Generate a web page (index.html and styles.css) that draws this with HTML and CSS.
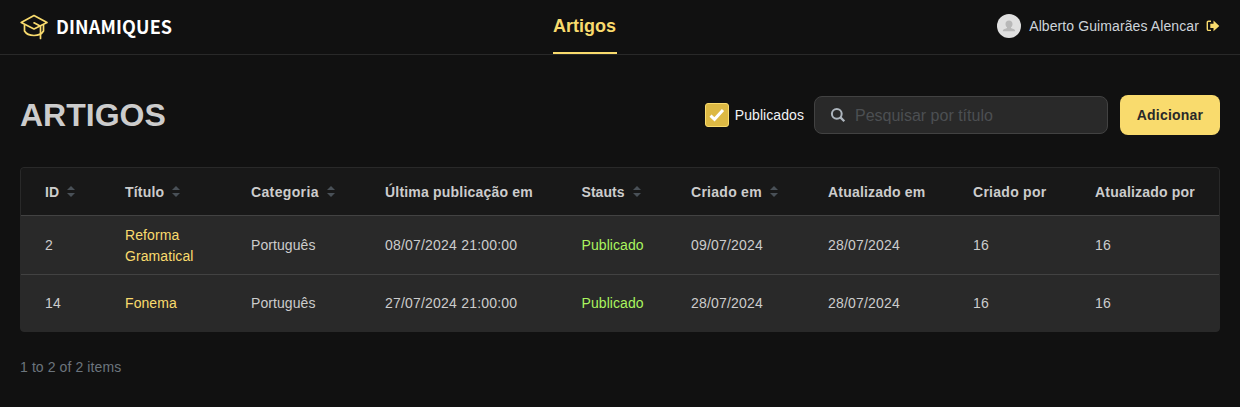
FILE: index.html
```html
<!DOCTYPE html>
<html lang="pt-BR">
<head>
<meta charset="utf-8">
<title>Dinamiques - Artigos</title>
<link rel="stylesheet" href="styles.css">
</head>
<body>
<header class="topbar">
  <a class="brand">
    <svg class="brand-icon" width="29" height="26" viewBox="0 0 29 26" fill="none" stroke="#f9db6d" stroke-width="1.700" stroke-linejoin="round" stroke-linecap="round"><path d="M1.200 8.500 14 1.500l13 7-13 6.500z"/><path d="M4.500 11v6c3.500 6 15.500 6 19 0v-6"/><path d="M14 8.800 20.500 12.300v12.200"/></svg>
    <span class="brand-name">DINAMIQUES</span>
  </a>
  <nav class="nav"><a class="nav-link">Artigos</a></nav>
  <div class="user">
    <svg width="24" height="24" viewBox="0 0 24 24"><circle cx="12" cy="12" r="12" fill="#e0e0e0"/><path d="M12 6.500c-2.200 0-3.500 1.400-3.500 3.500 0 1.500.6 2.600 1.500 3.200v.9c-.8.8-4.200.8-4.200 3.200h12.400c0-2.400-3.400-2.400-4.200-3.200v-.9c.9-.6 1.500-1.700 1.500-3.200 0-2.100-1.300-3.500-3.500-3.500z" fill="#b8b8b8"/></svg>
    <span class="user-name">Alberto Guimarães Alencar</span>
    <svg class="logout" width="14" height="12" viewBox="0 0 14 12"><path d="M5 1.200H2.500Q1.300 1.200 1.300 2.400v6.800q0 1.200 1.200 1.200H5" fill="none" stroke="#f9db6d" stroke-width="1.400"/><path d="M4.300 3.700h3.200V.5L13.300 5.900 7.500 11.300V8.100H4.300z" fill="#f9db6d"/></svg>
  </div>
</header>
<main class="page">
  <div class="toolbar">
    <h1 class="title">ARTIGOS</h1>
    <label class="check"><span class="check-box"><svg width="16" height="14" viewBox="0 0 16 14"><path d="M1.500 7.600 5.500 11.300 14 2" fill="none" stroke="#fff" stroke-width="3"/></svg></span><span class="check-label">Publicados</span></label>
    <div class="search">
      <svg width="16" height="16" viewBox="0 0 16 16" fill="none" stroke="#adb5bd"><circle cx="6.800" cy="6.800" r="4.900" stroke-width="2"/><path d="m10.400 10.400 3.900 3.900" stroke-width="2.300"/></svg>
      <span class="search-hint">Pesquisar por título</span>
    </div>
    <button class="add">Adicionar</button>
  </div>
  <div class="table">
    <div class="row head">
      <div class="cell"><span>ID</span><i class="sort"></i></div>
      <div class="cell"><span>Título</span><i class="sort"></i></div>
      <div class="cell wide"><span>Categoria</span><i class="sort"></i></div>
      <div class="cell"><span>Última publicação em</span></div>
      <div class="cell tight"><span>Stauts</span><i class="sort"></i></div>
      <div class="cell mid"><span>Criado em</span><i class="sort"></i></div>
      <div class="cell"><span>Atualizado em</span></div>
      <div class="cell mid"><span>Criado por</span></div>
      <div class="cell"><span>Atualizado por</span></div>
    </div>
    <div class="row first">
      <div class="cell">2</div>
      <div class="cell link">Reforma<br>Gramatical</div>
      <div class="cell word">Português</div>
      <div class="cell">08/07/2024 21:00:00</div>
      <div class="cell status">Publicado</div>
      <div class="cell">09/07/2024</div>
      <div class="cell">28/07/2024</div>
      <div class="cell">16</div>
      <div class="cell">16</div>
    </div>
    <div class="row">
      <div class="cell">14</div>
      <div class="cell link">Fonema</div>
      <div class="cell word">Português</div>
      <div class="cell">27/07/2024 21:00:00</div>
      <div class="cell status">Publicado</div>
      <div class="cell">28/07/2024</div>
      <div class="cell">28/07/2024</div>
      <div class="cell">16</div>
      <div class="cell">16</div>
    </div>
  </div>
  <div class="count">1 to 2 of 2 items</div>
</main>
</body>
</html>
```
FILE: styles.css
```css
* { box-sizing: border-box; }
body {
  margin: 0;
  background: #111;
  color: #ccc;
  font: 14px/21px "Liberation Sans", Arial, sans-serif;
}
.topbar {
  display: flex;
  justify-content: space-between;
  height: 55px;
  padding: 0 20px;
  border-bottom: 1px solid #292929;
}
.brand { display: flex; align-items: center; height: 53px; gap: 7px; }
.brand-name {
  width: 117px;
  padding-bottom: 1px;
  color: #fff;
  font: 700 18px/24px "Noto Sans CJK JP", sans-serif;
  letter-spacing: 0.15px;
}
.nav-link {
  display: block;
  width: 64px;
  height: 54px;
  padding-top: 15px;
  border-bottom: 2px solid #f9db6d;
  color: #f9db6d;
  font-size: 18px;
  font-weight: 700;
  line-height: 22px;
}
.user {
  display: flex;
  align-items: center;
  justify-content: flex-end;
  height: 52px;
}
.user-name { margin: 0 7px 0 8px; color: #ced4da; letter-spacing: 0.1px; }
.page { padding: 40px 20px 0; }
.toolbar { display: flex; align-items: center; height: 40px; }
.title {
  margin: 0 auto 0 0;
  color: #ccc;
  font-size: 32px;
  line-height: 40px;
}
.check { display: flex; align-items: center; gap: 6px; margin-right: 10px; }
.check-box {
  display: flex;
  align-items: center;
  justify-content: center;
  width: 24px;
  height: 24px;
  border: 1px solid #f9db6d;
  border-radius: 3px;
  background: #ddb944;
}
.check-label { color: #f1f3f5; letter-spacing: 0.07px; }
.search {
  display: flex;
  align-items: center;
  gap: 9px;
  width: 294px;
  height: 38px;
  margin-right: 12px;
  padding-left: 15px;
  border: 1px solid #424242;
  border-radius: 8px;
  background: #292929;
}
.search-hint { color: #4c4f52; font-size: 16px; }
.add {
  width: 100px;
  height: 40px;
  padding: 0;
  border: 0;
  border-radius: 8px;
  background: #f9db6d;
  color: #292929;
  font: 700 14px/20px "Liberation Sans", Arial, sans-serif;
  letter-spacing: 0.2px;
}
.table {
  margin-top: 32px;
  border: 1px solid #292929;
  border-radius: 4px;
  background: #292929;
  overflow: hidden;
}
.row {
  display: grid;
  grid-template-columns: 80px 126px 134px 196.5px 109.5px 137px 145px 122px 1fr;
  align-items: center;
  height: 56px;
}
.head {
  height: 48px;
  border-bottom: 1px solid #424242;
  background: #181818;
  color: #ccc;
  font-weight: 700;
}
.first { height: 59px; border-bottom: 1px solid #424242; }
.cell { padding-left: 24px; letter-spacing: 0.2px; white-space: nowrap; }
.head .cell { display: flex; align-items: center; padding-top: 2px; }
.link { color: #f9db6d; letter-spacing: 0.08px; }
.first .link { padding-top: 1px; }
.word { letter-spacing: 0.08px; }
.status { color: #a9f55f; letter-spacing: 0.08px; }
.head .wide { letter-spacing: 0.36px; }
.head .mid { letter-spacing: 0.27px; }
.head .tight { letter-spacing: 0.05px; }
.sort { margin-left: 8px; margin-top: -2px; }
.sort::before, .sort::after {
  content: "";
  display: block;
  border: 4px solid transparent;
}
.sort::before { border-top: 0; border-bottom-color: #495057; }
.sort::after { margin-top: 3px; border-bottom: 0; border-top-color: #495057; }
.count { margin-top: 25px; color: #6c757d; letter-spacing: 0.1px; }
```
